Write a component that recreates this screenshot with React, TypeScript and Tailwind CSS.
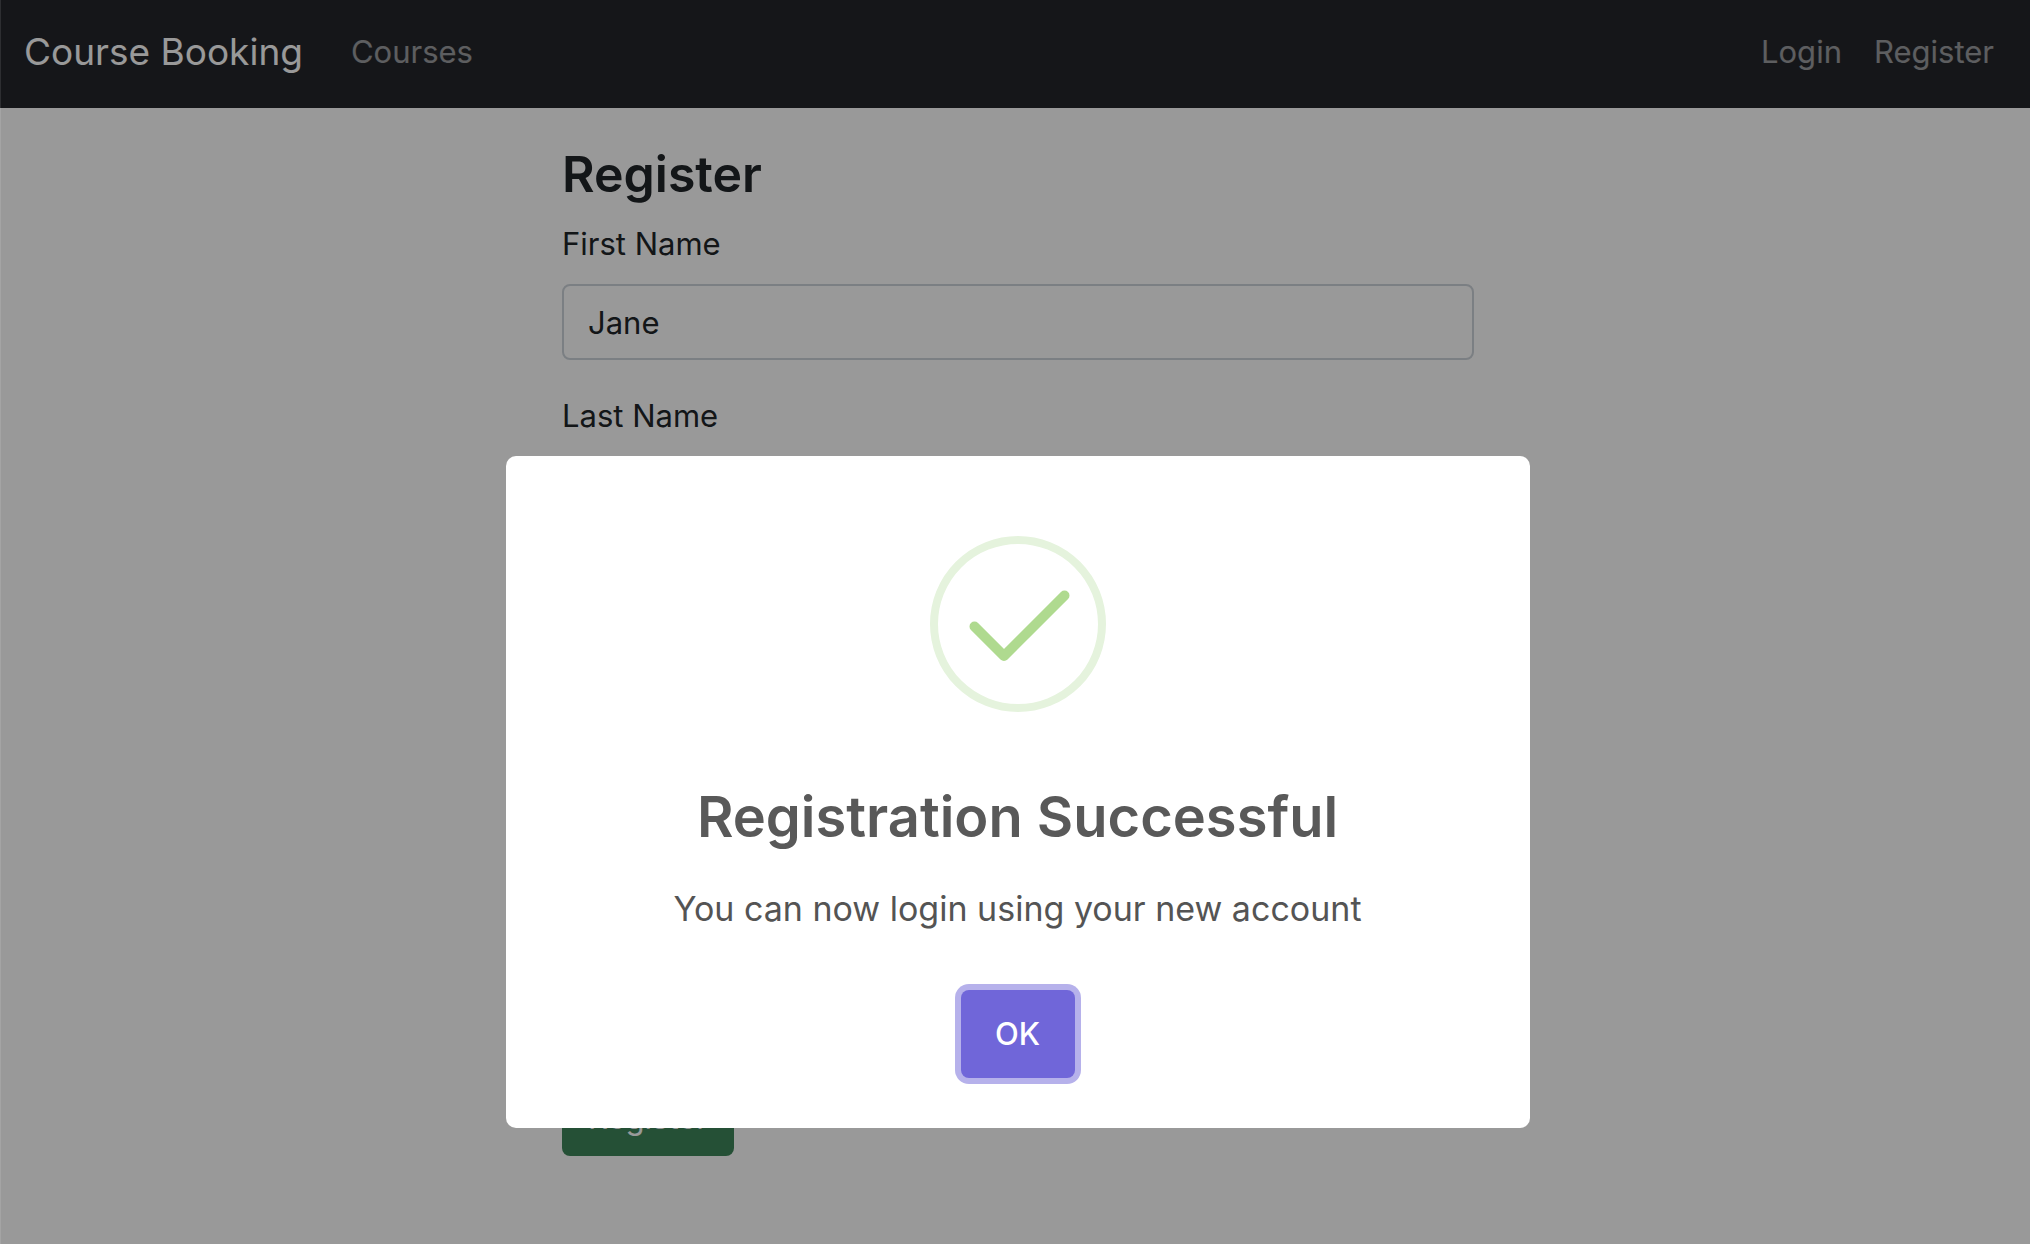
import { useState } from "react";

type Field = { id: string; label: string; type: string; value: string; labelled: boolean };

const initialFields: Field[] = [
  { id: "firstName", label: "First Name", type: "text", value: "Jane", labelled: true },
  { id: "lastName", label: "Last Name", type: "text", value: "", labelled: true },
  { id: "email", label: "Email", type: "email", value: "", labelled: false },
  { id: "mobile", label: "Mobile No", type: "text", value: "", labelled: false },
  { id: "password", label: "Password", type: "password", value: "", labelled: false },
];

function Navbar() {
  return (
    <nav className="flex h-[108px] items-center bg-[#23252b] pr-5 pb-1 pl-6 text-[31px] text-white/55">
      <a href="#home" className="mr-8 text-[37px] text-white">
        Course Booking
      </a>
      <a href="#courses" className="px-4">
        Courses
      </a>
      <div className="ml-auto flex">
        <a href="#login" className="px-4">
          Login
        </a>
        <a href="#register" className="px-4">
          Register
        </a>
      </div>
    </nav>
  );
}

function RegisterForm() {
  const [fields, setFields] = useState(initialFields);
  const update = (id: string, value: string) =>
    setFields(fields.map((f) => (f.id === id ? { ...f, value } : f)));

  return (
    <form className="mx-auto w-full max-w-[912px] pt-8 text-[31px] leading-[48px] text-[#212529]">
      <h1 className="mb-3 text-[50px] leading-[68px] font-semibold">Register</h1>
      {fields.map((f) => (
        <div key={f.id} className={f.labelled ? "mb-8" : "mb-8 pt-16"}>
          {f.labelled && (
            <label htmlFor={f.id} className="mb-4 block">
              {f.label}
            </label>
          )}
          <input
            id={f.id}
            type={f.type}
            aria-label={f.label}
            value={f.value}
            onChange={(e) => update(f.id, e.target.value)}
            className="block h-19 w-full rounded-lg border-2 border-[#ced4da] bg-white px-6"
          />
        </div>
      ))}
      <button type="button" className="h-19 rounded-lg bg-[#3f865a] px-[26px] text-white">
        Register
      </button>
    </form>
  );
}

function SuccessIcon() {
  return (
    <svg viewBox="0 0 176 176" className="mx-auto size-44" fill="none" aria-hidden="true">
      <circle cx="88" cy="88" r="84" stroke="#e5f3dd" strokeWidth="8" />
      <path
        d="M44.5 90.5 74 120M74 120 134.500 59.500"
        stroke="#afda8f"
        strokeWidth="10"
        strokeLinecap="round"
        strokeLinejoin="round"
      />
    </svg>
  );
}

function SuccessDialog() {
  return (
    <div className="fixed inset-0 flex items-start justify-center border-l border-white/10 bg-black/40 pt-[456px] pl-1">
      <div
        role="dialog"
        aria-modal="true"
        aria-labelledby="dialog-title"
        className="w-full max-w-[1024px] rounded-[10px] bg-white pt-20 pb-[50px] text-center text-[#545454]"
      >
        <SuccessIcon />
        <h2 id="dialog-title" className="mt-[69px] text-[56px] leading-[72px] font-semibold text-[#595959]">
          Registration Successful
        </h2>
        <p className="mt-7 text-[34px] leading-[56px]">You can now login using your new account</p>
        <button
          type="button"
          className="mt-[53px] h-22 w-[114px] rounded-lg bg-[#7066d9] text-[31px] font-medium text-white ring-6 ring-[#b6b1eb]"
        >
          OK
        </button>
      </div>
    </div>
  );
}

export default function App() {
  return (
    <div className="min-h-screen bg-white font-['Inter',sans-serif]">
      <Navbar />
      <main className="pl-1.5">
        <RegisterForm />
      </main>
      <SuccessDialog />
    </div>
  );
}
